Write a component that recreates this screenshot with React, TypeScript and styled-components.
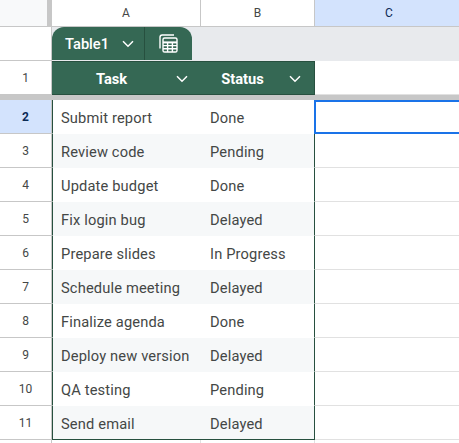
import React from "react";
import styled, { createGlobalStyle } from "styled-components";

const rows = [
  { n: 2, task: "Submit report", status: "Done" },
  { n: 3, task: "Review code", status: "Pending" },
  { n: 4, task: "Update budget", status: "Done" },
  { n: 5, task: "Fix login bug", status: "Delayed" },
  { n: 6, task: "Prepare slides", status: "In Progress" },
  { n: 7, task: "Schedule meeting", status: "Delayed" },
  { n: 8, task: "Finalize agenda", status: "Done" },
  { n: 9, task: "Deploy new version", status: "Delayed" },
  { n: 10, task: "QA testing", status: "Pending" },
  { n: 11, task: "Send email", status: "Delayed" },
];

const Chevron = () => (
  <svg width="12" height="8" viewBox="0 0 12 8" fill="none">
    <path d="M1 1.2 6 6.2 11 1.2" stroke="#fff" strokeWidth="1.5" />
  </svg>
);

const TableIcon = () => (
  <svg width="19" height="19" viewBox="0 0 19 19" fill="none" stroke="#fff" strokeWidth="1.4">
    <path d="M1 14.5V3.2C1 1.9 1.9 1 3.2 1H15" />
    <rect x="4" y="4" width="14" height="14" rx="1.6" />
    <path d="M4 8.4H18" strokeWidth="2" />
    <path d="M4 11.6H18M4 14.8H18M8.6 9V18M13.4 9V18" />
  </svg>
);

export default function App() {
  return (
    <Page>
      <GlobalStyle />
      <ColumnHeaders>
        <Corner />
        <ColumnLetter>A</ColumnLetter>
        <ColumnLetter>B</ColumnLetter>
        <ColumnLetter $active>C</ColumnLetter>
      </ColumnHeaders>

      <TabRow>
        <RowNumber />
        <TabBand>
          <TableTab>
            <TabName>
              Table1
              <Chevron />
            </TabName>
            <TabIcon>
              <TableIcon />
            </TabIcon>
          </TableTab>
        </TabBand>
      </TabRow>

      <Row>
        <RowNumber>1</RowNumber>
        <HeaderCell $width={149}>
          <HeaderLabel>Task</HeaderLabel>
          <Chevron />
        </HeaderCell>
        <HeaderCell $width={114}>
          <HeaderLabel>Status</HeaderLabel>
          <Chevron />
        </HeaderCell>
        <EmptyCell />
      </Row>

      <FreezeBar />

      {rows.map((row, i) => (
        <Row key={row.n}>
          <RowNumber $active={row.n === 2}>{row.n}</RowNumber>
          <TaskCell $striped={i % 2 === 1} $last={i === rows.length - 1}>
            {row.task}
          </TaskCell>
          <StatusCell $striped={i % 2 === 1} $last={i === rows.length - 1}>
            {row.status}
          </StatusCell>
          {row.n === 2 ? <SelectedCell /> : <EmptyCell />}
        </Row>
      ))}

      <Row>
        <RowNumber />
        <BlankCell $width={149} />
        <BlankCell $width={114} />
        <EmptyCell />
      </Row>
    </Page>
  );
}

const GlobalStyle = createGlobalStyle`
  html, body {
    margin: 0;
    padding: 0;
    background: #fff;
    overflow: hidden;
  }
  * {
    box-sizing: border-box;
  }
`;

const Page = styled.div`
  width: 459px;
  height: 443px;
  overflow: hidden;
  font-family: Roboto, "Liberation Sans", sans-serif;
  font-size: 14px;
  color: #444746;
`;

const ColumnHeaders = styled.div`
  display: grid;
  grid-template-columns: 52px 149px 114px 149px;
  height: 27px;
  border-bottom: 1px solid #c7c7c7;
`;

const Corner = styled.div`
  background: #f8f9fa;
  border-right: 5px solid #c7c7c7;
`;

const ColumnLetter = styled.div<{ $active?: boolean }>`
  display: flex;
  align-items: center;
  justify-content: center;
  font-size: 12px;
  color: ${(p) => (p.$active ? "#0b2a55" : "#444746")};
  background: ${(p) => (p.$active ? "#d3e3fd" : "#fff")};
  border-right: 1px solid #c7c7c7;
`;

const TabRow = styled.div`
  display: flex;
  height: 34px;
`;

const TabBand = styled.div`
  flex: 1;
  background: #e8eaed;
`;

const TableTab = styled.div`
  display: flex;
  width: 140px;
  height: 33px;
  background: #356854;
  border-radius: 12px 12px 0 0;
  color: #fff;
`;

const TabName = styled.div`
  display: flex;
  align-items: center;
  gap: 13px;
  width: 93px;
  padding-left: 13px;
  font-size: 14.67px;
  font-weight: 500;
  border-right: 1px solid #27503f;
`;

const TabIcon = styled.div`
  flex: 1;
  display: flex;
  align-items: center;
  justify-content: center;
`;

const Row = styled.div`
  display: flex;
  height: 34px;
`;

const RowNumber = styled.div<{ $active?: boolean }>`
  flex: 0 0 52px;
  display: flex;
  align-items: center;
  justify-content: center;
  font-size: 12px;
  font-weight: ${(p) => (p.$active ? 700 : 400)};
  color: ${(p) => (p.$active ? "#0b2a55" : "#444746")};
  background: ${(p) => (p.$active ? "#d3e3fd" : "#fff")};
  border-bottom: 1px solid #c7c7c7;
  border-right: 1px solid #c7c7c7;
`;

const HeaderCell = styled.div<{ $width: number }>`
  position: relative;
  flex: 0 0 ${(p) => p.$width}px;
  display: flex;
  align-items: center;
  justify-content: center;
  padding: 2px 30px 0 0;
  background: #356854;
  border-top: 1px solid #27503f;
  border-bottom: 1px solid #27503f;
  color: #fff;
  svg {
    position: absolute;
    right: 13px;
    top: 13px;
  }
  &:nth-child(3) {
    border-right: 1px solid #27503f;
  }
`;

const HeaderLabel = styled.span`
  font-size: 14.67px;
  font-weight: 700;
`;

const FreezeBar = styled.div`
  height: 5px;
  background: #c7c7c7;
`;

const BodyCell = styled.div<{ $striped?: boolean; $last?: boolean }>`
  display: flex;
  align-items: center;
  padding: 2px 0 0 8px;
  white-space: nowrap;
  font-size: 14.67px;
  letter-spacing: 0.15px;
  background: ${(p) => (p.$striped ? "#f6f8f9" : "#fff")};
  border-bottom: 1px solid ${(p) => (p.$last ? "#27503f" : "transparent")};
`;

const TaskCell = styled(BodyCell)`
  flex: 0 0 149px;
  border-left: 1px solid #27503f;
`;

const StatusCell = styled(BodyCell)`
  flex: 0 0 114px;
  padding-left: 9px;
  border-right: 1px solid #27503f;
`;

const EmptyCell = styled.div`
  flex: 1;
  background: #fff;
  border-bottom: 1px solid #e1e1e1;
`;

const SelectedCell = styled.div`
  flex: 1;
  margin-left: -1px;
  background: #fff;
  border: solid #1a73e8;
  border-width: 2px 0;
  border-left-width: 2px;
  z-index: 1;
`;

const BlankCell = styled.div<{ $width: number }>`
  flex: 0 0 ${(p) => p.$width}px;
  border-right: 1px solid #e1e1e1;
`;
